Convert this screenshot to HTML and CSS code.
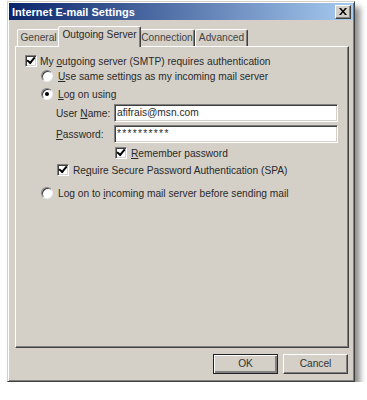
FILE: index.html
```html
<!DOCTYPE html>
<html lang="en">
<head>
    <meta charset="UTF-8">
    <meta name="viewport" content="width=device-width, initial-scale=1.0">
    <title>Internet E-mail Settings</title>
    <link rel="stylesheet" href="styles.css">
</head>
<body>
    <div class="window">
        <div class="titlebar">
            <span class="title">Internet E-mail Settings</span>
            <div class="close">
                <svg width="8" height="7" viewBox="0 0 8 7">
                    <path d="M0 0h2l2 2.5L6 0h2L5 3.5 8 7H6L4 4.5 2 7H0l3-3.5z" fill="#000"/>
                </svg>
            </div>
        </div>

        <div class="tabs">
            <div class="tab tab-general">General</div>
            <div class="tab active tab-outgoing">Outgoing Server</div>
            <div class="tab tab-connection">Connection</div>
            <div class="tab tab-advanced">Advanced</div>
        </div>

        <div class="panel">
            <div class="row row-auth">
                <span class="check checked"></span>
                <span>My <u>o</u>utgoing server (SMTP) requires authentication</span>
            </div>
            <div class="row row-radio1">
                <span class="radio"></span>
                <span><u>U</u>se same settings as my incoming mail server</span>
            </div>
            <div class="row row-radio2">
                <span class="radio selected"></span>
                <span><u>L</u>og on using</span>
            </div>
            <div class="field row-user">
                <label>User <u>N</u>ame:</label>
                <div class="input">afifrais@msn.com</div>
            </div>
            <div class="field row-pass">
                <label><u>P</u>assword:</label>
                <div class="input password">**********</div>
            </div>
            <div class="row row-remember">
                <span class="check checked"></span>
                <span><u>R</u>emember password</span>
            </div>
            <div class="row row-spa">
                <span class="check checked"></span>
                <span>Re<u>q</u>uire Secure Password Authentication (SPA)</span>
            </div>
            <div class="row row-radio3">
                <span class="radio"></span>
                <span>Log on to <u>i</u>ncoming mail server before sending mail</span>
            </div>
        </div>

        <div class="buttons">
            <div class="button default">OK</div>
            <div class="button">Cancel</div>
        </div>
    </div>
</body>
</html>
```

FILE: styles.css
```css
body {
    margin: 0;
    background-color: #fff;
    font-family: "Liberation Sans", Arial, sans-serif;
    font-size: 10.2px;
    color: #2a2a2a;
}
.window {
    margin: 1px 0 0 7px;
    width: 344px;
    height: 377px;
    display: flex;
    flex-direction: column;
    background-color: #d4d0c8;
    border: 1px solid;
    border-color: #d4d0c8 #404040 #404040 #d4d0c8;
    box-shadow: inset 1px 1px #fff, inset -1px -1px #808080, 5px 6px 6px rgba(0, 0, 0, 0.45);
    padding: 1px;
}
.titlebar {
    height: 17px;
    display: flex;
    align-items: center;
    justify-content: space-between;
    padding: 0 2px 0 3px;
    background: linear-gradient(to right, #0a246a, #a6caf0);
}
.title {
    color: #fff;
    font-weight: bold;
    font-size: 11px;
}
.close {
    width: 14px;
    height: 12px;
    display: flex;
    align-items: center;
    justify-content: center;
    background-color: #d4d0c8;
    border: 1px solid;
    border-color: #fff #404040 #404040 #fff;
    box-shadow: inset -1px -1px #808080;
}
.tabs {
    display: flex;
    align-items: flex-end;
    height: 19px;
    margin-top: 7px;
    padding-left: 8px;
    position: relative;
    z-index: 1;
}
.tab {
    height: 16px;
    line-height: 15px;
    text-align: center;
    white-space: nowrap;
    border: 1px solid;
    border-bottom: none;
    border-color: #fff #404040 transparent #fff;
    box-shadow: inset -1px 0 #808080;
    border-radius: 2px 2px 0 0;
    color: #444;
}
.tab-general { width: 41px; }
.tab-outgoing { width: 81px; }
.tab-connection { width: 54px; }
.tab-advanced { width: 51px; }
.tab.active {
    height: 20px;
    line-height: 16px;
    margin: 0 -2px -1px;
    background-color: #d4d0c8;
    color: #2a2a2a;
    position: relative;
}
.panel {
    margin: 0 4px 0 6px;
    border: 1px solid;
    border-color: #fff #404040 #404040 #fff;
    box-shadow: inset -1px -1px #808080;
    padding: 7px 0 0 9px;
    box-sizing: border-box;
    height: 302px;
}
.row {
    height: 14px;
    display: flex;
    align-items: center;
    white-space: nowrap;
}
.row-radio1 { margin: 1px 0 0 16px; }
.row-radio2 { margin: 4px 0 0 16px; }
.row-remember { margin: 3px 0 0 90px; }
.row-spa { margin: 3px 0 0 32px; }
.row-radio3 { margin: 9px 0 0 16px; }
.check {
    width: 10px;
    height: 10px;
    margin-right: 3px;
    background-color: #fff;
    border: 1px solid;
    border-color: #808080 #fff #fff #808080;
    box-shadow: inset 1px 1px #404040, inset -1px -1px #d4d0c8;
    display: flex;
    align-items: center;
    justify-content: center;
}
.check.checked::after {
    content: "";
    width: 6px;
    height: 3px;
    margin-top: -3px;
    border-left: 2px solid #000;
    border-bottom: 2px solid #000;
    transform: rotate(-50deg);
}
.row-remember .check, .row-spa .check {
    margin-right: 4px;
}
.radio {
    width: 10px;
    height: 10px;
    margin-right: 5px;
    border-radius: 50%;
    background-color: #fff;
    border: 1px solid;
    border-color: #808080 #eee #eee #808080;
    box-shadow: inset 1px 1px #404040;
    display: flex;
    align-items: center;
    justify-content: center;
}
.radio.selected::after {
    content: "";
    width: 4px;
    height: 4px;
    border-radius: 50%;
    background-color: #000;
}
.field {
    display: flex;
    align-items: center;
    height: 18px;
    padding-left: 31px;
}
.row-user { margin-top: 3px; }
.row-pass { margin-top: 3px; }
.field label {
    width: 58px;
    white-space: nowrap;
}
.input {
    width: 220px;
    height: 16px;
    line-height: 16px;
    padding-left: 2px;
    background-color: #fff;
    border: 1px solid;
    border-color: #808080 #fff #fff #808080;
    box-shadow: inset 1px 1px #404040, inset -1px -1px #d4d0c8;
    color: #2a2a2a;
}
.input.password {
    letter-spacing: 1.3px;
}
.buttons {
    display: flex;
    justify-content: flex-end;
    gap: 5px;
    margin-top: 6px;
    padding-right: 5px;
}
.button {
    width: 63px;
    height: 18px;
    line-height: 18px;
    text-align: center;
    border: 1px solid;
    border-color: #fff #404040 #404040 #fff;
    box-shadow: inset -1px -1px #808080;
    color: #333;
}
.button.default {
    border-color: #222;
    box-shadow: inset 1px 1px #fff, inset -2px -2px #808080;
}
```
